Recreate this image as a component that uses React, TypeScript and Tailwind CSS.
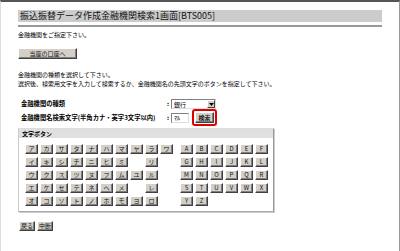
import React from "react";

const font = { fontFamily: '"Noto Sans CJK JP", "Liberation Sans", sans-serif' };

const kana: string[][] = [
  ["ア", "カ", "サ", "タ", "ナ", "ハ", "マ", "ヤ", "ラ", "ワ"],
  ["イ", "キ", "シ", "チ", "ニ", "ヒ", "ミ", "", "リ", ""],
  ["ウ", "ク", "ス", "ツ", "ヌ", "フ", "ム", "ユ", "ル", ""],
  ["エ", "ケ", "セ", "テ", "ネ", "ヘ", "メ", "", "レ", ""],
  ["オ", "コ", "ソ", "ト", "ノ", "ホ", "モ", "ヨ", "ロ", ""],
];

const alpha: string[][] = [
  ["A", "B", "C", "D", "E", "F"],
  ["G", "H", "I", "J", "K", "L"],
  ["M", "N", "O", "P", "Q", "R"],
  ["S", "T", "U", "V", "W", "X"],
  ["Y", "Z", "", "", "", ""],
];

function WinButton({ label, className = "" }: { label: string; className?: string }) {
  return (
    <button
      className={`flex items-center justify-center bg-[#d4d0c8] border border-t-white border-l-white border-r-[#404040] border-b-[#404040] shadow-[inset_-1px_-1px_0_#808080] text-[6px] leading-none text-[#111] ${className}`}
    >
      {label}
    </button>
  );
}

function KeyGrid({ rows, cols }: { rows: string[][]; cols: number }) {
  return (
    <div className={`grid gap-x-[2px] gap-y-[3px] ${cols === 10 ? "grid-cols-[repeat(10,13px)]" : "grid-cols-[repeat(6,13px)]"}`}>
      {rows.flat().map((k, i) =>
        k ? <WinButton key={i} label={k} className="h-[10px] w-[13px]" /> : <div key={i} className="h-[10px] w-[13px]" />
      )}
    </div>
  );
}

export default function App() {
  return (
    <div
      className="w-[400px] h-[251px] overflow-hidden bg-white border-t-2 border-t-[#555] border-l border-l-[#ddd] border-r border-r-[#999]"
      style={font}
    >
      <div className="ml-[17px] w-[364px] pt-[8px]">
        {/* title */}
        <div className="h-[12px] bg-[#cccccc] pl-[2px] text-[9px] leading-[12px] text-[#111]">
          振込振替データ作成金融機関検索1画面[BTS005]
        </div>
        <div className="mt-[3px] h-[2px] bg-[#999]" />

        <p className="mt-[4px] text-[6px] leading-[8px]">金融機関をご指定下さい。</p>

        <WinButton label="当座の口座へ" className="mt-[9px] h-[11px] w-[59px]" />

        <div className="mt-[11px] text-[6px] leading-[9px]">
          <p>金融機関の種類を選択して下さい。</p>
          <p>選択後、検索用文字を入力して検索するか、金融機関名の先頭文字のボタンを指定して下さい。</p>
        </div>

        {/* form rows */}
        <div className="mt-[11px] flex flex-col gap-[3px] pl-[3px] text-[6.3px] font-bold">
          <div className="flex h-[10px] items-center">
            <span className="w-[146px]">金融機関の種類</span>
            <span className="w-[4px]">:</span>
            <div className="flex h-[10px] w-[45px] items-center justify-between border border-t-[#808080] border-l-[#808080] border-r-[#ddd] border-b-[#ddd] bg-white pl-[2px] text-[6px] font-normal">
              <span>銀行</span>
              <span className="flex h-[8px] w-[8px] items-center justify-center bg-[#d4d0c8] border border-t-white border-l-white border-r-[#404040] border-b-[#404040]">
                <svg width="5" height="3" viewBox="0 0 5 3">
                  <path d="M0 0h5L2.5 3z" fill="#000" />
                </svg>
              </span>
            </div>
          </div>
          <div className="flex h-[11px] items-center">
            <span className="w-[146px] whitespace-nowrap">金融機関名検索文字(半角カナ・英字3文字以内)</span>
            <span className="w-[4px]">:</span>
            <div className="flex h-[10px] w-[18px] items-center border border-t-[#808080] border-l-[#808080] border-r-[#ddd] border-b-[#ddd] bg-white pl-[2px] text-[6px] font-normal">
              ﾏﾙ
            </div>
            <div className="-my-[3px] ml-[3px] rounded-[3px] border-2 border-[#e00000] p-[1px]">
              <WinButton label="検索" className="h-[11px] w-[19px]" />
            </div>
          </div>
        </div>

        {/* character buttons panel */}
        <div className="mt-[5px] w-[256px] border border-t-[#ddd] border-l-[#ccc] border-r-[#999] border-b-[#aaa] shadow-[1px_1px_0_#ccc] pb-[5px]">
          <div className="h-[9px] bg-[#e0e0e0] pl-[3px] text-[6px] font-bold leading-[9px]">文字ボタン</div>
          <div className="mt-[6px] flex gap-[7px] pl-[6px]">
            <KeyGrid rows={kana} cols={10} />
            <KeyGrid rows={alpha} cols={6} />
          </div>
        </div>

        <div className="mt-[9px] flex gap-[2px] pl-[1px]">
          <WinButton label="戻る" className="h-[10px] w-[16px]" />
          <WinButton label="中断" className="h-[10px] w-[16px]" />
        </div>
      </div>
    </div>
  );
}
